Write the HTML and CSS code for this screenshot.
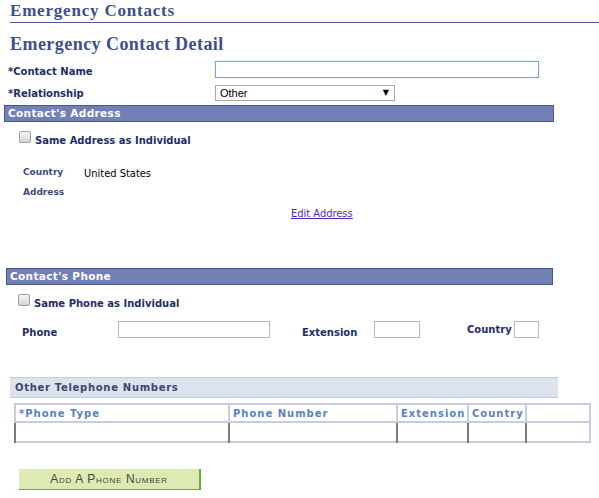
FILE: index.html
```html
<!DOCTYPE html>
<html lang="en">
<head>
    <meta charset="UTF-8">
    <title>Emergency Contacts</title>
    <link rel="stylesheet" href="styles.css">
</head>
<body>
    <h1 class="page-title">Emergency Contacts</h1>
    <h2 class="sub-title">Emergency Contact Detail</h2>

    <div class="form-row row-name">
        <label class="field-label" for="contactName"><span class="req">*</span>Contact Name</label>
        <input class="text-input name-input" id="contactName" type="text">
    </div>
    <div class="form-row row-rel">
        <label class="field-label" for="relationship"><span class="req">*</span>Relationship</label>
        <div class="select-wrap">
            <select class="select-input" id="relationship">
                <option>Other</option>
            </select>
            <span class="select-arrow">&#9660;</span>
        </div>
    </div>

    <div class="section-bar address-bar">Contact's Address</div>

    <div class="check-row address-check">
        <input type="checkbox" class="check" id="sameAddress">
        <label for="sameAddress">Same Address as Individual</label>
    </div>

    <div class="info-grid">
        <div class="info-label">Country</div>
        <div class="info-value">United States</div>
        <div class="info-label">Address</div>
        <div class="info-value"></div>
    </div>

    <div class="edit-link-row">
        <a href="#" class="edit-link">Edit Address</a>
    </div>

    <div class="section-bar phone-bar">Contact's Phone</div>

    <div class="check-row phone-check">
        <input type="checkbox" class="check" id="samePhone">
        <label for="samePhone">Same Phone as Individual</label>
    </div>

    <div class="phone-row">
        <label class="phone-label">Phone</label>
        <input class="text-input phone-input" type="text">
        <label class="ext-label">Extension</label>
        <input class="text-input ext-input" type="text">
        <label class="country-label">Country</label>
        <input class="text-input country-input" type="text">
    </div>

    <div class="grid-bar">Other Telephone Numbers</div>

    <table class="phone-grid">
        <tr>
            <th class="col-type"><span class="req-light">*</span>Phone Type</th>
            <th class="col-number">Phone Number</th>
            <th class="col-ext">Extension</th>
            <th class="col-country">Country</th>
            <th class="col-blank"></th>
        </tr>
        <tr>
            <td></td>
            <td></td>
            <td></td>
            <td></td>
            <td></td>
        </tr>
    </table>

    <button class="add-button">Add A Phone Number</button>
</body>
</html>
```

FILE: styles.css
```css
body {
    margin: 0;
    padding: 0;
    background: #ffffff;
    font-family: "DejaVu Sans", Verdana, sans-serif;
    font-size: 11px;
    color: #000000;
}

.page-title {
    margin: 0 0 0 10px;
    height: 22px;
    line-height: 22px;
    font-family: "Liberation Serif", "DejaVu Serif", serif;
    font-size: 17px;
    font-weight: bold;
    color: #3e4f8c;
    border-bottom: 1px solid #4a5a9c;
    letter-spacing: 0.8px;
}

.sub-title {
    margin: 9px 0 0 10px;
    height: 24px;
    line-height: 24px;
    font-family: "Liberation Serif", "DejaVu Serif", serif;
    font-size: 18px;
    font-weight: bold;
    color: #3e4f8c;
    letter-spacing: 0.45px;
}

.form-row {
    display: grid;
    grid-template-columns: 207px auto;
    align-items: end;
    padding-left: 8px;
}

.row-name {
    margin-top: 5px;
    height: 17px;
}

.row-rel {
    margin-top: 7px;
    height: 16px;
}

.field-label {
    font-weight: bold;
    font-size: 10px;
    color: #1f2d66;
    line-height: 12px;
    margin-bottom: 0;
}

.row-rel .field-label {
    margin-bottom: 1px;
}

.req {
    color: #1f2d66;
}

.text-input {
    box-sizing: border-box;
    height: 17px;
    margin: 0;
    padding: 0 3px;
    border: 1px solid #b9b9b9;
    background: #ffffff;
    font-family: "Liberation Sans", Arial, sans-serif;
    font-size: 11px;
}

.name-input {
    width: 324px;
    border-color: #7f9fe0;
    box-shadow: 0 0 1px #a8c0f0;
}

.select-wrap {
    position: relative;
    width: 180px;
    height: 16px;
}

.select-input {
    box-sizing: border-box;
    appearance: none;
    -webkit-appearance: none;
    width: 180px;
    height: 16px;
    margin: 0;
    padding: 0 4px;
    border: 1px solid #a8a8a8;
    border-radius: 0;
    background: #ffffff;
    font-family: "Liberation Sans", Arial, sans-serif;
    font-size: 11px;
    line-height: 14px;
    color: #000000;
}

.select-arrow {
    position: absolute;
    right: 6px;
    top: 2px;
    font-size: 8px;
    line-height: 12px;
    color: #000000;
}

.section-bar {
    box-sizing: border-box;
    height: 17px;
    line-height: 15px;
    padding-left: 3px;
    background: #7181b5;
    border: 1px solid #4a578c;
    color: #ffffff;
    font-weight: bold;
    font-size: 10.5px;
    letter-spacing: 0.35px;
}

.address-bar {
    margin: 4px 0 0 4px;
    width: 550px;
}

.phone-bar {
    margin: 47px 0 0 6px;
    width: 547px;
}

.check-row {
    display: flex;
    align-items: center;
    height: 14px;
}

.address-check {
    margin: 9px 0 0 19px;
}

.phone-check {
    margin: 9px 0 0 18px;
}

.check {
    appearance: none;
    -webkit-appearance: none;
    box-sizing: border-box;
    width: 12px;
    height: 12px;
    margin: 0 4px 0 0;
    border: 1px solid #a0a0a0;
    border-radius: 2px;
    background: linear-gradient(#f4f4f4, #d6d6d6);
    align-self: flex-start;
}

.check-row label {
    font-weight: bold;
    font-size: 10px;
    color: #1f2d66;
    line-height: 12px;
    margin-top: 6px;
}

.info-grid {
    display: grid;
    grid-template-columns: 61px auto;
    grid-auto-rows: 20px;
    margin: 21px 0 0 23px;
}

.info-label {
    font-weight: bold;
    font-size: 9px;
    color: #3d4a7a;
    line-height: 12px;
}

.info-value {
    font-family: "DejaVu Sans Condensed", "DejaVu Sans", sans-serif;
    font-size: 11px;
    line-height: 14px;
    padding-top: 1px;
}

.edit-link-row {
    margin-top: 1px;
    padding-left: 291px;
    height: 14px;
    line-height: 14px;
}

.edit-link {
    font-family: "DejaVu Sans Condensed", "DejaVu Sans", sans-serif;
    font-size: 11px;
    color: #5124cc;
    text-decoration: underline;
}

.phone-row {
    display: flex;
    align-items: flex-start;
    margin: 13px 0 0 22px;
    height: 17px;
}

.phone-label,
.ext-label,
.country-label {
    font-weight: bold;
    font-size: 10px;
    color: #1f2d66;
    line-height: 12px;
}

.phone-label {
    width: 96px;
    margin-top: 6px;
}

.phone-input {
    width: 152px;
}

.ext-label {
    margin: 6px 0 0 32px;
    width: 72px;
}

.ext-input {
    width: 46px;
}

.country-label {
    margin: 3px 0 0 47px;
    width: 47px;
}

.country-input {
    width: 25px;
}

.grid-bar {
    box-sizing: border-box;
    margin: 39px 0 0 10px;
    width: 548px;
    height: 21px;
    line-height: 19px;
    padding-left: 5px;
    background: #dce2ee;
    border-top: 1px solid #c5cddf;
    border-bottom: 1px solid #c5cddf;
    color: #3a4670;
    font-weight: bold;
    font-size: 10px;
    letter-spacing: 0.7px;
}

.phone-grid {
    margin: 5px 0 0 14px;
    width: 577px;
    border-collapse: collapse;
    border: 2px solid #c6cde0;
}

.phone-grid th {
    box-sizing: border-box;
    height: 18px;
    padding: 0 0 0 3px;
    text-align: left;
    font-weight: bold;
    font-size: 10px;
    color: #5b7fc2;
    letter-spacing: 1px;
    border-left: 2px solid #c6cde0;
    border-bottom: 2px solid #c6cde0;
    background: #ffffff;
}

.req-light {
    color: #5b7fc2;
}

.phone-grid td {
    box-sizing: border-box;
    height: 20px;
    padding: 0;
    border-top: 2px solid #7a7a80;
    border-left: 2px solid #7a7a80;
    background: #ffffff;
}

.col-type { width: 214px; }
.col-number { width: 168px; }
.col-ext { width: 71px; }
.col-country { width: 58px; }

.add-button {
    display: block;
    box-sizing: border-box;
    margin: 26px 0 0 19px;
    width: 182px;
    height: 21px;
    padding: 0;
    background: #deeab4;
    border: none;
    border-right: 2px solid #6aa840;
    border-bottom: 1px solid #6aa840;
    font-family: "Liberation Sans", Arial, sans-serif;
    font-size: 12px;
    font-variant: small-caps;
    letter-spacing: 0.7px;
    color: #404838;
    cursor: pointer;
}
```
